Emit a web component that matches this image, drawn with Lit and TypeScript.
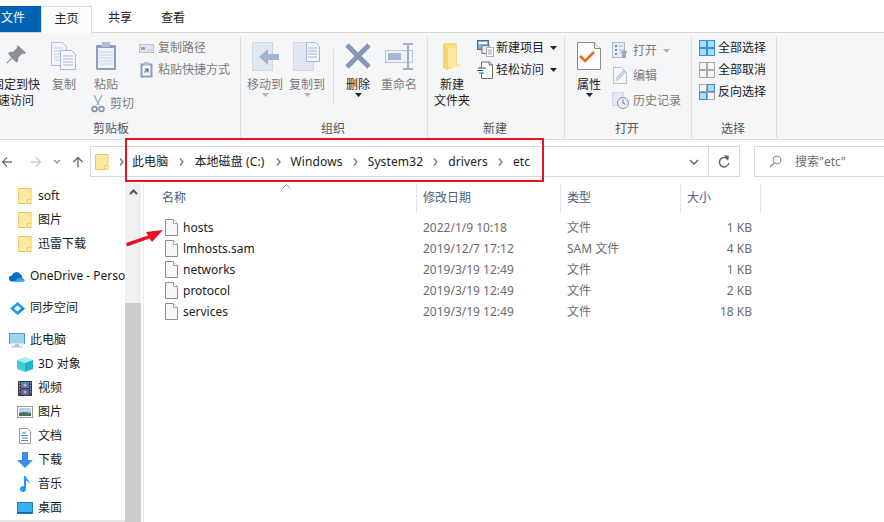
import { LitElement, html, css, svg } from "lit";
import { customElement } from "lit/decorators.js";

const ic = (w: number, h: number, body: unknown) =>
  html`<svg class="ic" width=${w} height=${h} viewBox="0 0 ${w} ${h}">${body}</svg>`;

const caret = html`<svg class="caret" width="7" height="4" viewBox="0 0 7 4"><path d="M0 0h7L3.5 4z" fill="#222"/></svg>`;
const caretGrey = html`<svg class="caret" width="7" height="4" viewBox="0 0 7 4"><path d="M0 0h7L3.5 4z" fill="#b5b5b5"/></svg>`;

const folder = ic(14, 16, svg`<path d="M.5 .5h12.5v15H.5z" fill="#fde9a4" stroke="#eec95f"/><path d="M9.5 15.500v-4h3.500" fill="#fff3c7" stroke="#eec95f"/>`);
const doc = ic(13, 17, svg`<path d="M.5.5h8l4 4v12H.500z" fill="#f8f8f8" stroke="#8d8d8d"/><path d="M8.500.5v4h4" fill="#fff" stroke="#a5a5a5"/>`);

const pin = html`<svg class="ic" width="21" height="22" viewBox="0 0 24 26"><path d="M14 1l9 8-2 2-2-1-5 5 0 4-2 2-5-5-6 6-1-1 6-6-4-5 2-2 4 0 5-5-1-2z" fill="#8c8f94"/></svg>`;
const copy = ic(26, 28, svg`<path d="M.5.5h11l4 4v19H.500z" fill="#f1f5fb" stroke="#b4c0d8"/><path d="M3 6h9M3 9h9M3 12h9M3 15h9M3 18h9" stroke="#c6d0e2"/><path d="M9.500 8.500h11l4 4v15h-15z" fill="#f5f8fc" stroke="#a7b6d2"/><path d="M12 14h10M12 17h10M12 20h10M12 23h10" stroke="#a9b7d1"/>`);
const paste = ic(22, 30, svg`<rect x="1" y="4" width="20" height="25" rx="1" fill="#8d9dbc"/><rect x="3" y="7" width="16" height="20" fill="#eef2f9"/><path d="M4 11h14M4 14h14M4 17h14M4 20h14M4 23h14" stroke="#c9d3e6"/><rect x="7" y="1" width="8" height="5" fill="#b5bfd2"/>`);
const cut = ic(14, 18, svg`<path d="M3 0l5 10M11 0L6 10" stroke="#9fb0cc" stroke-width="1.500" fill="none"/><circle cx="3.500" cy="14" r="2.500" fill="none" stroke="#7d8ba6" stroke-width="1.500"/><circle cx="10.500" cy="14" r="2.500" fill="none" stroke="#7d8ba6" stroke-width="1.500"/>`);
const copyPath = ic(15, 9, svg`<rect x=".5" y=".5" width="14" height="8" fill="#dfe5f1" stroke="#b7c2d9"/><path d="M2 3l1 3 1-3 1 3 1-3M8 6h.8M10 6h.8M12 6h.8" stroke="#7c8aa6" fill="none" stroke-width=".8"/>`);
const pasteShort = ic(13, 16, svg`<rect x=".5" y="1.500" width="12" height="14" fill="#8d9dbc"/><rect x="2.500" y="3.500" width="8" height="10" fill="#f2f5fa"/><rect x="4" y="0" width="5" height="3" fill="#b5bfd2"/><path d="M4.500 11V7.500H8M5 8l3 3" stroke="#5b6c8c" fill="none" stroke-width="1.200" transform="rotate(90 6.500 9)"/>`);
const moveTo = ic(27, 29, svg`<rect x=".5" y=".5" width="20" height="28" fill="#e1e8f4" stroke="#cfd9ea"/><path d="M27 12h-11v-5l-9 8 9 8v-5h11z" fill="#a4b3cf"/>`);
const copyTo = ic(28, 29, svg`<rect x=".5" y=".5" width="20" height="28" fill="#e1e8f4" stroke="#cfd9ea"/><path d="M13.500 .5h9l4 4v15h-13z" fill="#f2f5fa" stroke="#a7b6d2"/><path d="M15 6h9M15 9h9M15 12h9M15 15h9" stroke="#a9b7d1"/>`);
const del = ic(26, 26, svg`<path d="M2 2l22 22M24 2L2 24" stroke="#8797b5" stroke-width="5"/>`);
const rename = ic(29, 27, svg`<rect x=".5" y="7.500" width="27" height="12" fill="#edf1f8" stroke="#bac6dc"/><rect x="3" y="10" width="13" height="7" fill="#a8b6d1"/><path d="M18 1h4l1 1 1-1h4M23 2v23M18 26h4l1-1 1 1h4" stroke="#9fadc7" stroke-width="2" fill="none"/>`);
const newFolder = ic(20, 28, svg`<path d="M1 1h13l1 2v21l-1 0-8 4-5-2z" fill="#f7dc7f"/><path d="M6 6h8v16h5l-1 3H6z" fill="#fde9a4"/><path d="M1 1l5 5v22L1 25z" fill="#f5d570"/>`);
const newItem = ic(17, 17, svg`<rect x=".5" y=".5" width="11" height="9" fill="#7fb2d9" stroke="#4a6d8c"/><rect x="2" y="2" width="8" height="2" fill="#fff"/><rect x="5" y="5.500" width="7" height="8" fill="#eee" stroke="#777"/><rect x="9.500" y="7.500" width="7" height="9" fill="#fff" stroke="#a9a9c9"/><path d="M11 10h4M11 12h4M11 14h4" stroke="#d88"/>`);
const easy = ic(16, 18, svg`<path d="M4.500 1h8l3 3v13.500h-11V12M4.500 7V1" fill="#fff" stroke="#6b6b6b"/><path d="M12 1v3h3.500" fill="none" stroke="#6b6b6b"/><path d="M1 7h8M0 9.500h6M2 12h5" stroke="#20639b"/>`);
const props = ic(24, 28, svg`<path d="M.5.5h17l6 6v21H.500z" fill="#fff" stroke="#8a8a8a"/><path d="M17.500.5v6h6" fill="#f2f2f2" stroke="#8a8a8a"/><path d="M3 14l5 5 9-9" stroke="#f0641e" stroke-width="2.600" fill="none"/>`);
const open = ic(16, 17, svg`<rect x=".5" y=".5" width="12" height="15" fill="#e8edf5" stroke="#aebcd4"/><path d="M3 3h2v2H3zM3 7h2v2H3zM3 11h2v2H3z" fill="#7f90ae"/><path d="M7 4h4M7 8h3" stroke="#aebcd4"/><path d="M12 7l4 4h-2v5h-4v-5H8z" fill="#9baccb"/>`);
const edit = ic(14, 17, svg`<path d="M.5.5h8l5 5v11H.500z" fill="#f3f6fb" stroke="#b4c0d8"/><path d="M3 14l1-4 7-7 2 2-7 7z" fill="#cdd6e6" stroke="#a9b7d1" stroke-width=".6"/>`);
const history = ic(17, 17, svg`<rect x=".5" y=".5" width="11" height="13" fill="#e1e8f4" stroke="#cfd9ea"/><circle cx="11" cy="11" r="5.500" fill="#e8ecf3" stroke="#8492ad"/><path d="M11 7.500V11l2.500 1.500" stroke="#6b7a98" fill="none"/>`);
const gridIc = (fills: string[], stroke: string[]) => {
  const pos: [number, number][] = [[.5,.5],[8.5,.5],[.5,8.5],[8.5,8.5]];
  return ic(16, 16, pos.map(([x, y], i) => svg`<rect x=${x} y=${y} width="7" height="7" fill=${fills[i]} stroke=${stroke[i]}/>`));
};
const selAll = gridIc(["#a9dcfc","#a9dcfc","#a9dcfc","#a9dcfc"], ["#3b8fd6","#3b8fd6","#3b8fd6","#3b8fd6"]);
const selNone = gridIc(["none","none","none","none"], ["#a9a9a9","#a9a9a9","#a9a9a9","#a9a9a9"]);
const selInv = gridIc(["none","#a9dcfc","#a9dcfc","none"], ["#a9a9a9","#3b8fd6","#3b8fd6","#a9a9a9"]);

const navIcons: Record<string, unknown> = {
  onedrive: ic(16, 11, svg`<path d="M3 10.500a3 3 0 0 1 0-6 4.500 4.500 0 0 1 8-1.500 3.500 3.500 0 0 1 2 4 2 2 0 0 1 1 3.500z" fill="#0f6cbd"/><path d="M6 10.500l3-4 4 0.500 3 2-1 1.500z" fill="#28a8ea"/>`),
  sync: ic(15, 13, svg`<path d="M7.500 0L15 6.500 7.500 13 0 6.500z" fill="#1e9bf0"/><path d="M7.500 3.500L11 6.500 7.500 9.500 4 6.500z" fill="#fff"/><path d="M11 6.500L15 6.500 7.500 13z" fill="#2c7fe0"/>`),
  pc: ic(16, 15, svg`<rect x=".5" y=".5" width="15" height="10" fill="#9bd6f3" stroke="#5d93b5"/><path d="M1 10h14v1.500H1z" fill="#d8e6ef"/><path d="M6 11.500h4v1.500H6z" fill="#a7b5bf"/><path d="M3 13h10v1.500H3z" fill="#b9c6cf"/>`),
  cube: ic(16, 15, svg`<path d="M8 0l8 3-8 3-8-3z" fill="#a5ecf2"/><path d="M0 3l8 3v9l-8-3z" fill="#3fcfdb"/><path d="M16 3l-8 3v9l8-3z" fill="#1bb4c6"/>`),
  film: ic(14, 15, svg`<rect width="14" height="15" fill="#3f3f3f"/><rect x="3" y="1" width="8" height="6" fill="#4a7bd0"/><rect x="3" y="8" width="8" height="6" fill="#5a5fc0"/><circle cx="7" cy="4" r="1.500" fill="#e8b93a"/><circle cx="7" cy="11" r="1.500" fill="#e8b93a"/><path d="M1 2h1M1 5h1M1 8h1M1 11h1M12 2h1M12 5h1M12 8h1M12 11h1" stroke="#ddd"/>`),
  pic: ic(16, 12, svg`<rect x=".5" y=".5" width="15" height="11" fill="#fff" stroke="#9c9c9c"/><rect x="2" y="2" width="12" height="8" fill="#b5d3ea"/><path d="M2 7l5-1 7 1v3H2z" fill="#4e6b5a"/>`),
  docs: ic(12, 16, svg`<path d="M.5.5h8l3 3v12H.500z" fill="#fff" stroke="#9a9a9a"/><path d="M3 5h4M2 7.500h7M3 10h6M2 12.500h7" stroke="#3a88c9"/>`),
  down: ic(16, 16, svg`<path d="M5 0h6v8h5l-8 8-8-8h5z" fill="#3a8fe0"/>`),
  music: ic(12, 16, svg`<path d="M5 0h1.500c.5 3 4.500 4 4 8-.5-2-2-3-3.500-3.300V13a3 3 0 1 1-2-2.800z" fill="#1e9bf0"/>`),
  desk: ic(16, 12, svg`<rect width="16" height="12" fill="#1a7dd0"/><rect x="1" y="1" width="14" height="9" fill="#35b1f2"/><path d="M1 10h14v1H1z" fill="#0d5ea6"/>`),
};

const chev = html`<svg class="chev" width="5" height="8" viewBox="0 0 5 8"><path d="M1 .5L4 4 1 7.500" fill="none" stroke="#7a7a7a" stroke-width="1.300"/></svg>`;

@customElement("app-root")
export class AppRoot extends LitElement {
  static styles = css`
    :host { display: block; width: 884px; height: 522px; overflow: hidden; position: relative; background: #fff;
      font: 12px/16px "Noto Sans", "Noto Sans CJK SC", sans-serif; color: #222; }
    * { box-sizing: border-box; }
    .ic { display: block; flex: none; }
    .tabs { display: flex; height: 33px; padding-top: 6px; position: relative; z-index: 1; }
    .tab { height: 26px; line-height: 24px; text-align: center; }
    .file { width: 41px; background: #0063b1; color: #fff; text-align: left; padding-left: 1px; }
    .home { width: 51px; height: 27px; background: #fafbfb; border: 1px solid #d9d9d9; border-bottom: none; }
    .share { width: 56px; }
    .view { width: 50px; }
    .ribbon { display: flex; height: 108px; margin-top: -1px; background: #f5f6f7; border-top: 1px solid #d9d9d9; border-bottom: 1px solid #dadbdc; }
    .group { display: flex; flex-direction: column; height: 102px; margin-top: 3px; border-right: 1px solid #dfe0e1; flex: none; }
    .g1 { width: 257px; margin-left: -16px; } .g2 { width: 187px; } .g3 { width: 137px; } .g4 { width: 127px; } .g5 { width: 85px; }
    .body { display: flex; flex: 1; min-height: 0; }
    .label { height: 20px; line-height: 21px; text-align: center; color: #555; flex: none; padding-right: 2px; }
    .big { display: flex; flex-direction: column; align-items: center; flex: none; text-align: center; line-height: 16px; }
    .big .slot { height: 40px; display: flex; align-items: center; justify-content: center; margin-bottom: 1px; }
    .big .caret { margin: 0 auto; }
    .dim { color: #7b7b7b; }
    .small { display: flex; align-items: center; gap: 5px; height: 22px; white-space: nowrap; }
    .col { display: flex; flex-direction: column; flex: none; }
    .small .caret { margin-left: 2px; }
    .pinb { width: 48px; margin-left: 8px; }
    .copyb { width: 36px; margin-left: 6px; }
    .pastec { margin-left: 8px; width: 56px; }
    .pasteb { width: 32px; }
    .cutb { margin: 0 0 0 1px; }
    .spath { margin-left: -7px; padding-top: 1px; }
    .spath .small { height: 22px; gap: 4px; }
    .spath .ii { width: 15px; display: flex; justify-content: center; }
    .moveb { width: 48px; }
    .copyt { width: 48px; margin-left: -6px; }
    .vsep { width: 1px; height: 55px; margin: 13px 0 0 2px; background: #dfe0e1; flex: none; }
    .delb { width: 40px; margin-left: 4px; }
    .renb { width: 48px; margin-left: -3px; }
    .newb { width: 48px; }
    .newc { margin-left: 1px; padding-top: 1px; }
    .newc .small { gap: 2px; }
    .newc .small .caret { margin-left: 4px; }
    .newc .ii { width: 17px; }
    .propb { width: 36px; margin-left: 6px; }
    .openc { margin-left: 4px; padding-top: 2px; }
    .openc .small { height: 25px; gap: 4px; }
    .openc .ii { width: 18px; display: flex; justify-content: center; }
    .selc { margin-left: 7px; padding-top: 1px; }
    .selc .small { gap: 3px; }
    .addr { display: flex; align-items: center; height: 43px; position: relative; }
    .nv { flex: none; display: flex; justify-content: center; }
    .nv1 { width: 14px; }
    .nv2 { width: 30px; margin-left: 7px; }
    .nv3 { width: 10px; margin-left: 1px; }
    .nv4 { width: 12px; margin-left: 10px; margin-right: 3px; }
    .box { margin-left: 3px; width: 650px; height: 31px; border: 1px solid #d9d9d9; display: flex; align-items: center; padding-left: 4px; flex: none; }
    .crumbs { display: flex; align-items: center; flex: 1; white-space: nowrap; letter-spacing: .12px; }
    .crumbs .chev { margin: 0 10px; flex: none; }
    .crumbs .chev:first-child { margin: 0 8px 0 10px; }
    .wide { margin-right: 1px; }
    .ddr { width: 30px; height: 29px; border-right: 1px solid #d9d9d9; display: flex; align-items: center; justify-content: center; }
    .ref { width: 30px; display: flex; align-items: center; justify-content: center; }
    .search { margin-left: 14px; flex: 1; height: 31px; border: 1px solid #d9d9d9; border-right: none; display: flex; align-items: center; padding-left: 14px; gap: 13px; color: #6d6d6d; }
    .main { display: flex; height: 339px; }
    .nav { width: 125px; flex: none; overflow: hidden; padding-top: 1px; border-bottom: 2px solid #e6e6e6; height: 339px; }
    .nrow { display: flex; align-items: center; height: 24px; white-space: nowrap; color: #1a1a1a; }
    .nrow .ii { width: 16px; display: flex; justify-content: center; flex: none; }
    .l0 { padding-left: 9px; gap: 5px; }
    .l1 { padding-left: 17px; gap: 5px; }
    .gap { margin-top: 8px; }
    .vbar { width: 16px; flex: none; background: #f0f0f0; display: flex; flex-direction: column; align-items: center; }
    .vbar .up { height: 120px; padding-top: 6px; }
    .thumb { flex: 1; width: 100%; background: #cdcdcd; }
    .list { flex: 1; margin-left: 2px; border-left: 1px solid #ededed; position: relative; }
    .hdr { display: grid; grid-template-columns: 272px 144px 120px 80px; height: 27px; margin: 1px 0 0 1px; position: relative; }
    .hdr div { border-right: 1px solid #e5e5e5; padding-left: 6px; line-height: 28px; color: #4c607a; }
    .hdr div:first-child { padding-left: 17px; }
    .sort { position: absolute; left: 137px; top: 0; }
    .rows { padding-top: 6px; }
    .row { display: grid; grid-template-columns: 39px 240px 144px 120px 65px; height: 21px; align-items: center; color: #6d6d6d; }
    .row .ri { padding-left: 21px; }
    .row .nm { color: #222; }
    .row .sz { text-align: right; }
    .redbox { position: absolute; left: 125px; top: 138px; width: 419px; height: 44px; border: 2px solid #e81224; pointer-events: none; z-index: 2; }
    .arrow { position: absolute; left: 124px; top: 228px; z-index: 2; }
  `;

  render() {
    return html`
      <div class="tabs">
        <div class="tab file">文件</div>
        <div class="tab home">主页</div>
        <div class="tab share">共享</div>
        <div class="tab view">查看</div>
      </div>
      <div class="ribbon">
        <div class="group g1">
          <div class="body">
            <div class="big pinb"><div class="slot">${pin}</div><span>固定到快速访问</span></div>
            <div class="big copyb dim"><div class="slot">${copy}</div><span>复制</span></div>
            <div class="col pastec">
              <div class="big pasteb dim"><div class="slot">${paste}</div><span>粘贴</span></div>
              <div class="small cutb dim"><span>${cut}</span><span>剪切</span></div>
            </div>
            <div class="col spath dim">
              <div class="small"><span class="ii">${copyPath}</span>复制路径</div>
              <div class="small"><span class="ii">${pasteShort}</span>粘贴快捷方式</div>
            </div>
          </div>
          <div class="label">剪贴板</div>
        </div>
        <div class="group g2">
          <div class="body">
            <div class="big moveb dim"><div class="slot">${moveTo}</div><span>移动到</span>${caretGrey}</div>
            <div class="big copyt dim"><div class="slot">${copyTo}</div><span>复制到</span>${caretGrey}</div>
            <div class="vsep"></div>
            <div class="big delb"><div class="slot">${del}</div><span>删除</span>${caret}</div>
            <div class="big renb dim"><div class="slot">${rename}</div><span>重命名</span></div>
          </div>
          <div class="label">组织</div>
        </div>
        <div class="group g3">
          <div class="body">
            <div class="big newb"><div class="slot">${newFolder}</div><span>新建<br />文件夹</span></div>
            <div class="col newc">
              <div class="small"><span class="ii">${newItem}</span>新建项目${caret}</div>
              <div class="small"><span class="ii">${easy}</span>轻松访问${caret}</div>
            </div>
          </div>
          <div class="label">新建</div>
        </div>
        <div class="group g4">
          <div class="body">
            <div class="big propb"><div class="slot">${props}</div><span>属性</span>${caret}</div>
            <div class="col openc dim">
              <div class="small"><span class="ii">${open}</span>打开${caretGrey}</div>
              <div class="small"><span class="ii">${edit}</span>编辑</div>
              <div class="small"><span class="ii">${history}</span>历史记录</div>
            </div>
          </div>
          <div class="label">打开</div>
        </div>
        <div class="group g5">
          <div class="body">
            <div class="col selc">
              <div class="small">${selAll}全部选择</div>
              <div class="small">${selNone}全部取消</div>
              <div class="small">${selInv}反向选择</div>
            </div>
          </div>
          <div class="label">选择</div>
        </div>
      </div>
      <div class="addr">
        <div class="nv nv1">${ic(12, 12, svg`<path d="M11 6H1.500M6 1.500L1.500 6 6 10.500" fill="none" stroke="#777" stroke-width="1.300"/>`)}</div>
        <div class="nv nv2">${ic(12, 12, svg`<path d="M1 6h9.500M6 1.500L10.500 6 6 10.500" fill="none" stroke="#ccc" stroke-width="1.300"/>`)}</div>
        <div class="nv nv3">${ic(8, 5, svg`<path d="M1 1l3 3 3-3" fill="none" stroke="#888" stroke-width="1.200"/>`)}</div>
        <div class="nv nv4">${ic(12, 12, svg`<path d="M6 11.500V1.500M1.500 6L6 1.500 10.500 6" fill="none" stroke="#666" stroke-width="1.300"/>`)}</div>
        <div class="box">
          ${folder}
          <div class="crumbs">
            ${chev}<span class="wide">此电脑</span>
            ${chev}<span class="wide">本地磁盘 (C:)</span>
            ${chev}<span>Windows</span>
            ${chev}<span>System32</span>
            ${chev}<span>drivers</span>
            ${chev}<span>etc</span>
          </div>
          <div class="ddr">${ic(10, 6, svg`<path d="M1 1l4 4 4-4" fill="none" stroke="#666" stroke-width="1.500"/>`)}</div>
          <div class="ref">${ic(12, 13, svg`<path d="M10 4.500A4.700 4.700 0 1 0 10.800 8" fill="none" stroke="#666" stroke-width="1.500"/><path d="M6 0l5 1-1 5z" fill="#666"/>`)}</div>
        </div>
        <div class="search">
          ${ic(13, 13, svg`<circle cx="8" cy="5" r="4" fill="none" stroke="#888"/><path d="M5 8l-4 4" stroke="#888" stroke-width="1.300"/>`)}
          <span>搜索"etc"</span>
        </div>
      </div>
      <div class="main">
        <div class="nav">
          ${this.navRow("l1", folder, "soft")}
          ${this.navRow("l1", folder, "图片")}
          ${this.navRow("l1", folder, "迅雷下载")}
          ${this.navRow("l0 gap", navIcons.onedrive, "OneDrive - Personal")}
          ${this.navRow("l0 gap", navIcons.sync, "同步空间")}
          ${this.navRow("l0 gap", navIcons.pc, "此电脑")}
          ${this.navRow("l1", navIcons.cube, "3D 对象")}
          ${this.navRow("l1", navIcons.film, "视频")}
          ${this.navRow("l1", navIcons.pic, "图片")}
          ${this.navRow("l1", navIcons.docs, "文档")}
          ${this.navRow("l1", navIcons.down, "下载")}
          ${this.navRow("l1", navIcons.music, "音乐")}
          ${this.navRow("l1", navIcons.desk, "桌面")}
        </div>
        <div class="vbar">
          <div class="up">${ic(9, 6, svg`<path d="M1 5l3.500-3.500L8 5" fill="none" stroke="#555" stroke-width="2"/>`)}</div>
          <div class="thumb"></div>
        </div>
        <div class="list">
          <div class="hdr">
            <div>名称</div><div>修改日期</div><div>类型</div><div>大小</div>
            <svg class="sort" width="9" height="5" viewBox="0 0 9 5"><path d="M.5 4.500l4-4 4 4" fill="none" stroke="#999"/></svg>
          </div>
          <div class="rows">
            ${this.fileRow("hosts", "2022/1/9 10:18", "文件", "1 KB")}
            ${this.fileRow("lmhosts.sam", "2019/12/7 17:12", "SAM 文件", "4 KB")}
            ${this.fileRow("networks", "2019/3/19 12:49", "文件", "1 KB")}
            ${this.fileRow("protocol", "2019/3/19 12:49", "文件", "2 KB")}
            ${this.fileRow("services", "2019/3/19 12:49", "文件", "18 KB")}
          </div>
        </div>
      </div>
      <div class="redbox"></div>
      <svg class="arrow" width="42" height="20" viewBox="0 0 42 20"><path d="M2 15L24 7.500 22 4l17-2-11 12-2.500-3.500L3 18.500z" fill="#e81224"/></svg>
    `;
  }

  navRow(cls: string, icon: unknown, text: string) {
    return html`<div class="nrow ${cls}"><span class="ii">${icon}</span><span>${text}</span></div>`;
  }

  fileRow(name: string, date: string, type: string, size: string) {
    return html`<div class="row"><div class="ri">${doc}</div><div class="nm">${name}</div><div>${date}</div><div>${type}</div><div class="sz">${size}</div></div>`;
  }
}
